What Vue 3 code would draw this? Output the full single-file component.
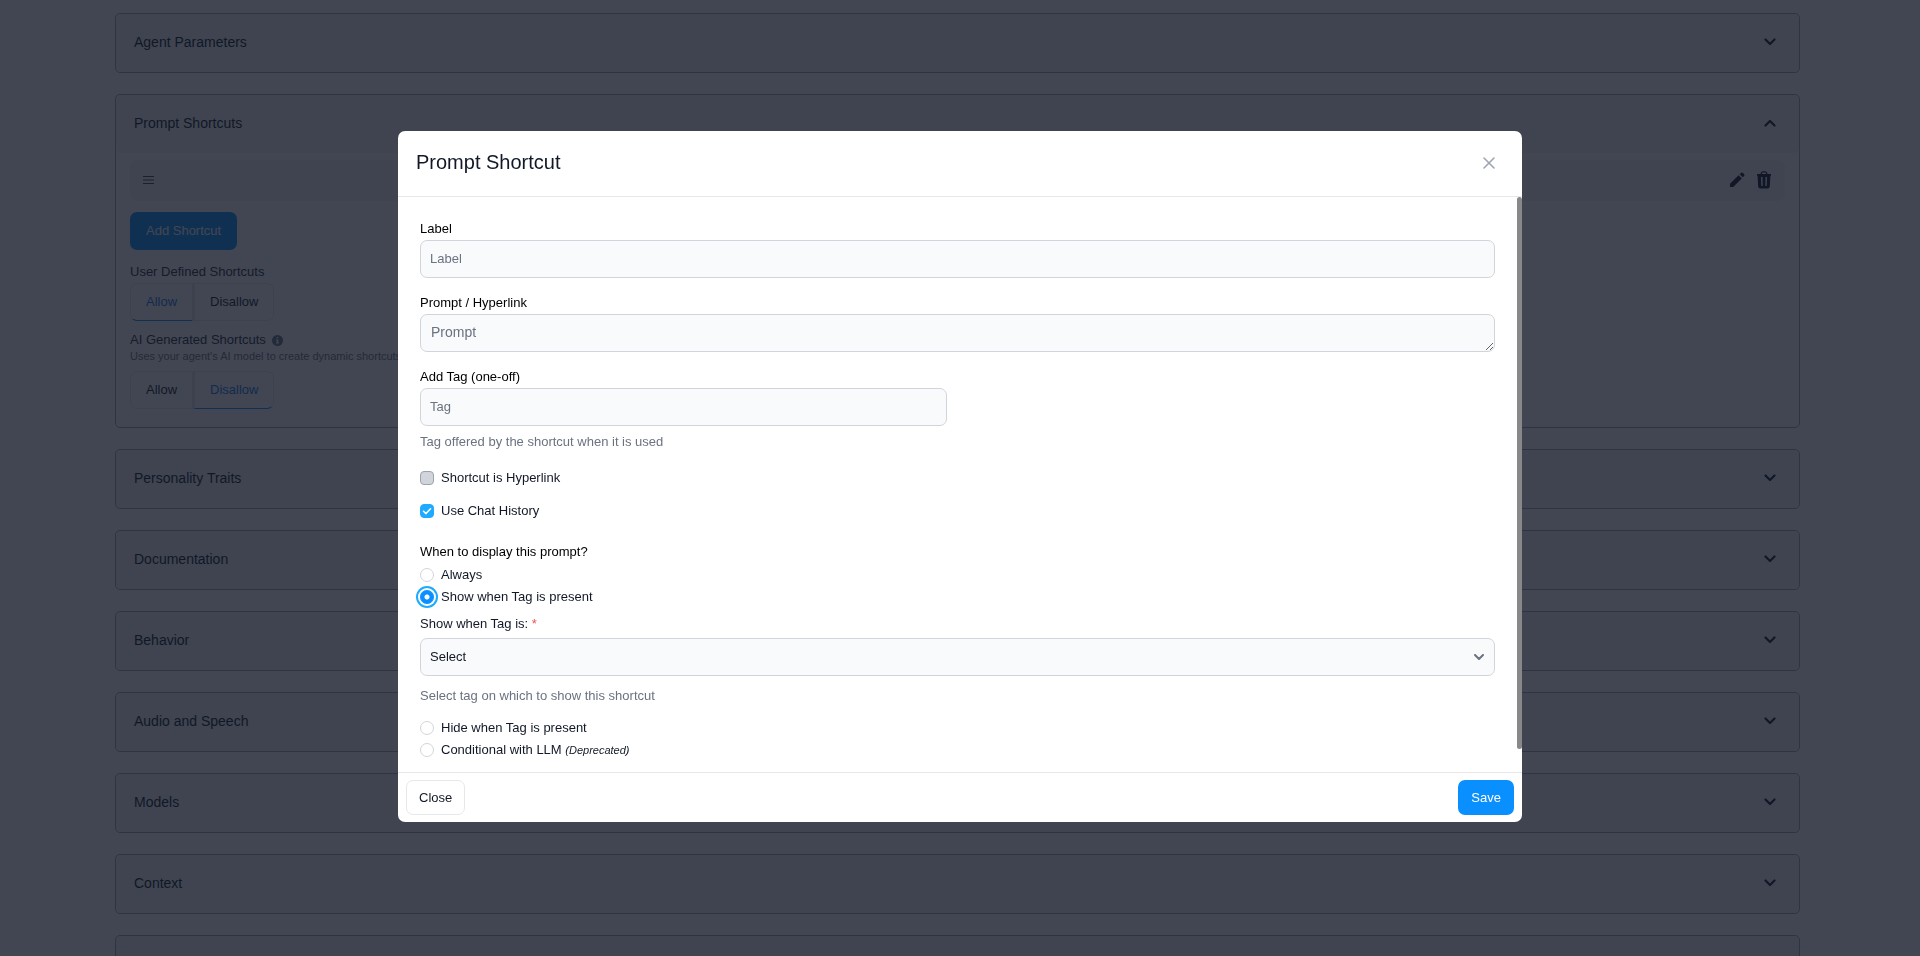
<script setup>
import { ref } from 'vue'

const laterSections = ['Personality Traits', 'Documentation', 'Behavior', 'Audio and Speech', 'Models', 'Context', '']
const userDefined = ref('Allow')
const aiGenerated = ref('Disallow')
const label = ref('')
const prompt = ref('')
const tag = ref('')
const isHyperlink = ref(false)
const useHistory = ref(true)
const display = ref('show')
const showTag = ref('')
</script>

<template>
  <div class="page">
    <main class="sections">
      <section class="card">
        <button class="card-head" type="button">
          <span>Agent Parameters</span>
          <svg class="chevron" viewBox="0 0 12 12" aria-hidden="true"><path d="M1.500 3.500 6 8l4.500-4.500" /></svg>
        </button>
      </section>

      <section class="card">
        <button class="card-head open" type="button">
          <span>Prompt Shortcuts</span>
          <svg class="chevron" viewBox="0 0 12 12" aria-hidden="true"><path d="M1.500 8.500 6 4l4.500 4.500" /></svg>
        </button>
        <div class="card-body">
          <div class="shortcut-row">
            <svg class="grip" viewBox="0 0 12 10" aria-hidden="true"><path d="M0 1.500h11M0 5h11M0 8.500h11" /></svg>
            <div class="row-actions">
              <button class="icon-button" type="button" aria-label="Edit shortcut">
                <svg viewBox="0 0 18 18" aria-hidden="true">
                  <path d="M2 12.800 10.600 4.200l3.200 3.200L5.200 16H2zM11.700 3.200l1.300-1.300a1.400 1.400 0 0 1 1.900 0l1.200 1.200a1.400 1.400 0 0 1 0 1.900l-1.300 1.300z" />
                </svg>
              </button>
              <button class="icon-button" type="button" aria-label="Delete shortcut">
                <svg viewBox="0 0 18 18" aria-hidden="true">
                  <path fill-rule="evenodd" d="M2 3h3.500C5.700 1.200 6.700.2 8 .2h2c1.300 0 2.300 1 2.500 2.800H16v1.700h-.6l-.6 10.800a2 2 0 0 1-2 1.900H5.200a2 2 0 0 1-2-1.900L2.600 4.700H2zM6.700 3h4.600c-.2-1-.7-1.600-1.500-1.600H8.200C7.400 1.400 6.900 2 6.700 3zM6 6l.3 9h1.400L7.500 6zm4.500 0-.2 9h1.400l.3-9z" />
                </svg>
              </button>
            </div>
          </div>

          <button class="button primary add" type="button">Add Shortcut</button>

          <h3 class="setting">User Defined Shortcuts</h3>
          <div class="toggle" role="group" aria-label="User Defined Shortcuts">
            <button
              v-for="choice in ['Allow', 'Disallow']"
              :key="choice"
              type="button"
              :class="{ active: userDefined === choice }"
              @click="userDefined = choice"
            >{{ choice }}</button>
          </div>

          <h3 class="setting second">
            AI Generated Shortcuts
            <svg class="info" viewBox="0 0 12 12" aria-hidden="true">
              <circle cx="6" cy="6" r="6" />
              <path d="M5.200 2.300h1.600v1.500H5.200zM4.500 4.900h2.300v3.300h.9v1.100H4.300V8.200h.9V6h-.7z" />
            </svg>
          </h3>
          <p class="note">Uses your agent's AI model to create dynamic shortcuts</p>
          <div class="toggle" role="group" aria-label="AI Generated Shortcuts">
            <button
              v-for="choice in ['Allow', 'Disallow']"
              :key="choice"
              type="button"
              :class="{ active: aiGenerated === choice }"
              @click="aiGenerated = choice"
            >{{ choice }}</button>
          </div>
        </div>
      </section>

      <section v-for="title in laterSections" :key="title" class="card">
        <button class="card-head" type="button">
          <span>{{ title }}</span>
          <svg class="chevron" viewBox="0 0 12 12" aria-hidden="true"><path d="M1.500 3.500 6 8l4.500-4.500" /></svg>
        </button>
      </section>
    </main>

    <div class="backdrop">
      <form class="modal" role="dialog" aria-modal="true" aria-labelledby="modal-title" @submit.prevent>
        <header class="modal-head">
          <h2 id="modal-title">Prompt Shortcut</h2>
          <button class="dismiss" type="button" aria-label="Dismiss">
            <svg viewBox="0 0 12 12" aria-hidden="true"><path d="m1 1 10 10M11 1 1 11" /></svg>
          </button>
        </header>

        <div class="scroll-area">
          <div class="modal-body">
            <div class="field">
              <label for="f-label">Label</label>
              <input id="f-label" v-model="label" class="control" type="text" placeholder="Label" />
            </div>
            <div class="field">
              <label for="f-prompt">Prompt / Hyperlink</label>
              <textarea id="f-prompt" v-model="prompt" class="control" rows="1" placeholder="Prompt"></textarea>
            </div>
            <div class="field half">
              <label for="f-tag">Add Tag (one-off)</label>
              <input id="f-tag" v-model="tag" class="control" type="text" placeholder="Tag" />
            </div>
            <p class="help">Tag offered by the shortcut when it is used</p>

            <div class="checks">
              <label class="option"><input v-model="isHyperlink" type="checkbox" />Shortcut is Hyperlink</label>
              <label class="option"><input v-model="useHistory" type="checkbox" />Use Chat History</label>
            </div>

            <fieldset class="radios">
              <legend>When to display this prompt?</legend>
              <label class="option"><input v-model="display" type="radio" name="display" value="always" />Always</label>
              <label class="option"><input v-model="display" type="radio" name="display" value="show" />Show when Tag is present</label>
              <div class="nested">
                <label for="f-show">Show when Tag is: <span class="required">*</span></label>
                <div class="select">
                  <select id="f-show" v-model="showTag" class="control">
                    <option value="">Select</option>
                  </select>
                  <svg viewBox="0 0 10 6" aria-hidden="true"><path d="m1 1 4 4 4-4" /></svg>
                </div>
                <p>Select tag on which to show this shortcut</p>
              </div>
              <label class="option"><input v-model="display" type="radio" name="display" value="hide" />Hide when Tag is present</label>
              <label class="option"><input v-model="display" type="radio" name="display" value="llm" /><span>Conditional with LLM <em>(Deprecated)</em></span></label>
            </fieldset>
          </div>
          <div class="scroll-track" aria-hidden="true"><div class="scroll-thumb"></div></div>
        </div>

        <footer class="modal-foot">
          <button class="button plain" type="button">Close</button>
          <button class="button primary" type="submit">Save</button>
        </footer>
      </form>
    </div>
  </div>
</template>

<style>
body {
  margin: 0;
}
</style>

<style scoped>
.page,
.page * {
  box-sizing: border-box;
}

.page {
  height: 100vh;
  overflow: hidden;
  background: #fff;
  color: #111827;
  font: 13px/18px "Liberation Sans", Arial, sans-serif;
}

button,
input,
textarea,
select {
  margin: 0;
  font: inherit;
  color: inherit;
}

button {
  cursor: pointer;
}

h2,
h3,
p {
  margin: 0;
  font-weight: 400;
}

.sections {
  display: flex;
  flex-direction: column;
  gap: 21px;
  padding: 13px 120px 0 115px;
}

.card {
  flex: none;
  border: 1px solid #9ca3af;
  border-radius: 5px;
}

.card-head {
  display: flex;
  align-items: center;
  justify-content: space-between;
  width: 100%;
  height: 58px;
  padding: 0 23px 2px 18px;
  border: 0;
  border-radius: 5px;
  background: #f3f4f6;
  font-size: 14px;
}

.chevron {
  width: 12px;
  height: 12px;
  fill: none;
  stroke: currentColor;
  stroke-width: 2.2;
  stroke-linecap: round;
  stroke-linejoin: round;
}

.card-body {
  padding: 7px 14px 18px;
}

.shortcut-row {
  display: flex;
  align-items: center;
  justify-content: space-between;
  height: 41px;
  padding: 0 12px 1px 13px;
  border-radius: 7px;
  background: #f3f4f6;
}

.grip {
  width: 12px;
  height: 10px;
  stroke: #374151;
  stroke-width: 1.2;
}

.row-actions {
  display: flex;
  gap: 9px;
}

.icon-button {
  display: flex;
  padding: 0;
  border: 0;
  background: none;
}

.icon-button svg {
  width: 18px;
  height: 18px;
  fill: currentColor;
}

.button {
  border-radius: 7px;
  border: 1px solid transparent;
}

.primary {
  background: #0a8fff;
  color: #fff;
}

.plain {
  border-color: #e5e7eb;
  background: #fff;
}

.add {
  display: block;
  height: 38px;
  margin: 11px 0 13px;
  padding: 0 15px;
}

.setting {
  display: flex;
  align-items: center;
  gap: 6px;
  font-size: 13px;
  line-height: 18px;
  margin-bottom: 2px;
  color: #1f2937;
}

.second {
  margin: 10px 0 0;
}

.info {
  width: 11px;
  height: 11px;
  fill: #6b7280;
}

.info path {
  fill: #fff;
}

.note {
  margin-bottom: 8px;
  font-size: 11px;
  line-height: 14px;
  color: #6b7280;
}

.toggle {
  display: flex;
  height: 38px;
}

.toggle button {
  padding: 0 15px;
  border: 1px solid #e5e7eb;
  border-radius: 7px 0 0 7px;
  background: none;
}

.toggle button + button {
  border-left-width: 2px;
  border-radius: 0 7px 7px 0;
}

.toggle .active {
  color: #1677e6;
  border-bottom-color: #0a8fff;
}

.backdrop {
  position: fixed;
  inset: 0;
  display: flex;
  align-items: center;
  justify-content: center;
  padding-bottom: 3px;
  background: rgba(17, 24, 39, 0.8);
}

.modal {
  display: flex;
  flex-direction: column;
  width: 100%;
  max-width: 1124px;
  overflow: hidden;
  border-radius: 7px;
  background: #fff;
}

.modal-head {
  display: flex;
  align-items: center;
  justify-content: space-between;
  padding: 18px 27px 20px 18px;
  border-bottom: 1px solid #e5e7eb;
}

.modal-head h2 {
  font-size: 20px;
  line-height: 27px;
}

.dismiss {
  display: flex;
  padding: 0;
  border: 0;
  background: none;
  color: #9ca3af;
}

.dismiss svg {
  width: 12px;
  height: 12px;
  fill: none;
  stroke: currentColor;
  stroke-width: 1.5;
  stroke-linecap: round;
}

.scroll-area {
  position: relative;
}

.modal-body {
  height: calc(100vh - 381px);
  padding: 23px 27px 36px 22px;
  overflow-y: auto;
  scrollbar-width: none;
}

.scroll-track {
  position: absolute;
  top: 0;
  right: 0;
  bottom: 0;
  width: 5px;
  pointer-events: none;
}

.scroll-thumb {
  height: 96%;
  border-radius: 3px;
  background: #888;
}

.field {
  display: flex;
  flex-direction: column;
  gap: 2px;
  margin-bottom: 16px;
  color: #000;
}

.half {
  width: 49%;
  margin-bottom: 7px;
}

.control {
  display: block;
  width: 100%;
  height: 38px;
  padding: 0 9px 1px;
  border: 1px solid #d1d5db;
  border-radius: 7px;
  outline: 0;
  background: #f9fafb;
  color: #111827;
}

.control::placeholder {
  color: #6b7280;
  opacity: 1;
}

textarea.control {
  padding: 7px 10px;
  font-size: 14px;
  line-height: 20px;
  overflow: hidden;
}

.help {
  color: #6b7280;
}

.checks {
  display: flex;
  flex-direction: column;
  gap: 15px;
  margin: 18px 0 23px;
}

.option {
  display: flex;
  align-items: center;
  gap: 7px;
}

.option input {
  appearance: none;
  flex: none;
  width: 14px;
  height: 14px;
  border: 1px solid #d1d5db;
  outline: 0;
}

.option input[type="checkbox"] {
  border-color: #9ca3af;
  border-radius: 4px;
  background: #d1d5db;
}

.option input[type="checkbox"]:checked {
  border-color: #1eaaff;
  background: #1eaaff url("data:image/svg+xml,%3Csvg xmlns='http://www.w3.org/2000/svg' viewBox='0 0 12 12'%3E%3Cpath d='M2.500 6.300 5 8.600 9.500 3.800' fill='none' stroke='white' stroke-width='1.500' stroke-linecap='round' stroke-linejoin='round'/%3E%3C/svg%3E") center / 12px 12px no-repeat;
}

.option input[type="radio"] {
  border-radius: 50%;
  background: #fff;
}

.option input[type="radio"]:checked {
  border-color: #0a8fff;
  background: radial-gradient(circle, #fff 2px, #0a8fff 3px);
  box-shadow: 0 0 0 2px #fff, 0 0 0 4px #1eaaff;
}

.radios {
  display: flex;
  flex-direction: column;
  gap: 4px;
  min-width: 0;
  margin: 0;
  padding: 0;
  border: 0;
}

.radios legend {
  margin-bottom: 5px;
  padding: 0;
  color: #000;
}

.nested {
  margin: 5px 0 10px;
}

.required {
  color: #f05252;
}

.select {
  position: relative;
  margin: 5px 0 11px;
}

.select select {
  appearance: none;
}

.select svg {
  position: absolute;
  top: 16px;
  right: 11px;
  width: 10px;
  height: 6px;
  fill: none;
  stroke: #6b7280;
  stroke-width: 2;
  stroke-linecap: round;
  stroke-linejoin: round;
  pointer-events: none;
}

.nested p {
  color: #6b7280;
}

em {
  font-size: 11px;
}

.modal-foot {
  display: flex;
  justify-content: space-between;
  padding: 7px 8px;
  border-top: 1px solid #e5e7eb;
}

.modal-foot .button {
  height: 35px;
  padding: 0 12px;
}
</style>
